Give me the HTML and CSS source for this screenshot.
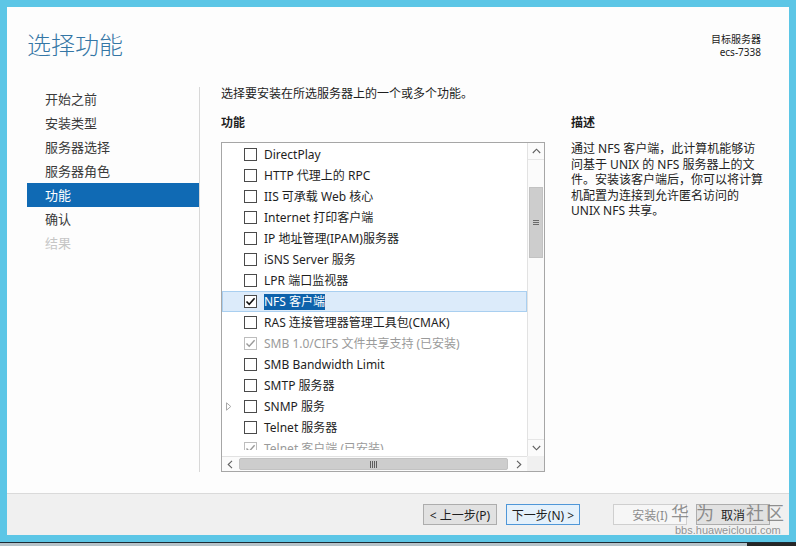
FILE: index.html
```html
<!DOCTYPE html>
<html lang="zh-CN">
<head>
    <meta charset="UTF-8">
    <title>添加角色和功能向导 - 选择功能</title>
    <link rel="stylesheet" href="styles.css">
</head>
<body>
    <div class="screen">
        <div class="window">
            <!-- Header: page title and target server -->
            <div class="head">
                <h1 class="title">选择功能</h1>
                <div class="target">
                    <div>目标服务器</div>
                    <div>ecs-7338</div>
                </div>
            </div>

            <div class="body">
                <!-- Wizard steps -->
                <div class="steps">
                    <div class="step">开始之前</div>
                    <div class="step">安装类型</div>
                    <div class="step">服务器选择</div>
                    <div class="step">服务器角色</div>
                    <div class="step active">功能</div>
                    <div class="step">确认</div>
                    <div class="step disabled">结果</div>
                </div>

                <div class="content">
                    <p class="intro">选择要安装在所选服务器上的一个或多个功能。</p>
                    <div class="cols">
                        <div class="features">
                            <div class="label">功能</div>
                            <div class="listbox">
                                <div class="list-main">
                                    <div class="rows-wrap">
                                        <div class="rows">
                                            <div class="row"><span class="exp"></span><span class="check"></span><span class="name">DirectPlay</span></div>
                                            <div class="row"><span class="exp"></span><span class="check"></span><span class="name">HTTP 代理上的 RPC</span></div>
                                            <div class="row"><span class="exp"></span><span class="check"></span><span class="name">IIS 可承载 Web 核心</span></div>
                                            <div class="row"><span class="exp"></span><span class="check"></span><span class="name">Internet 打印客户端</span></div>
                                            <div class="row"><span class="exp"></span><span class="check"></span><span class="name">IP 地址管理(IPAM)服务器</span></div>
                                            <div class="row"><span class="exp"></span><span class="check"></span><span class="name">iSNS Server 服务</span></div>
                                            <div class="row"><span class="exp"></span><span class="check"></span><span class="name">LPR 端口监视器</span></div>
                                            <div class="row selected"><span class="exp"></span><span class="check"><svg viewBox="0 0 11 11" width="11" height="11"><path d="M1.5 5.5 L4.2 8.3 L9.6 2.2" fill="none" stroke="#111" stroke-width="1.6"/></svg></span><span class="name"><span class="hl">NFS 客户端</span></span></div>
                                            <div class="row"><span class="exp"></span><span class="check"></span><span class="name">RAS 连接管理器管理工具包(CMAK)</span></div>
                                            <div class="row installed"><span class="exp"></span><span class="check"><svg viewBox="0 0 11 11" width="11" height="11"><path d="M1.5 5.5 L4.2 8.3 L9.6 2.2" fill="none" stroke="#9a9a9a" stroke-width="1.4"/></svg></span><span class="name">SMB 1.0/CIFS 文件共享支持 (已安装)</span></div>
                                            <div class="row"><span class="exp"></span><span class="check"></span><span class="name">SMB Bandwidth Limit</span></div>
                                            <div class="row"><span class="exp"></span><span class="check"></span><span class="name">SMTP 服务器</span></div>
                                            <div class="row"><span class="exp"><svg viewBox="0 0 6 9" width="6" height="9"><path d="M0.5 0.8 L4.8 4.5 L0.5 8.2 Z" fill="none" stroke="#a8a8a8" stroke-width="1"/></svg></span><span class="check"></span><span class="name">SNMP 服务</span></div>
                                            <div class="row"><span class="exp"></span><span class="check"></span><span class="name">Telnet 服务器</span></div>
                                            <div class="row installed"><span class="exp"></span><span class="check"><svg viewBox="0 0 11 11" width="11" height="11"><path d="M1.5 5.5 L4.2 8.3 L9.6 2.2" fill="none" stroke="#9a9a9a" stroke-width="1.4"/></svg></span><span class="name">Telnet 客户端 (已安装)</span></div>
                                        </div>
                                    </div>
                                    <div class="vscroll">
                                        <div class="arrow"><svg viewBox="0 0 9 6" width="9" height="6"><path d="M0.8 5 L4.5 1.2 L8.2 5" fill="none" stroke="#606060" stroke-width="1.1"/></svg></div>
                                        <div class="vtrack">
                                            <div class="vthumb"><span class="grip-h"></span></div>
                                        </div>
                                        <div class="arrow"><svg viewBox="0 0 9 6" width="9" height="6"><path d="M0.8 1 L4.5 4.8 L8.2 1" fill="none" stroke="#606060" stroke-width="1.1"/></svg></div>
                                    </div>
                                </div>
                                <div class="list-foot">
                                    <div class="hscroll">
                                        <div class="arrow"><svg viewBox="0 0 6 9" width="6" height="9"><path d="M5 0.8 L1.2 4.5 L5 8.2" fill="none" stroke="#606060" stroke-width="1.1"/></svg></div>
                                        <div class="hthumb"><span class="grip-v"></span></div>
                                        <div class="arrow"><svg viewBox="0 0 6 9" width="6" height="9"><path d="M1 0.8 L4.8 4.5 L1 8.2" fill="none" stroke="#606060" stroke-width="1.1"/></svg></div>
                                    </div>
                                    <div class="corner"></div>
                                </div>
                            </div>
                        </div>

                        <div class="desc">
                            <div class="label">描述</div>
                            <p class="desc-text">通过 NFS 客户端，此计算机能够访<br>问基于 UNIX 的 NFS 服务器上的文<br>件。安装该客户端后，你可以将计算<br>机配置为连接到允许匿名访问的<br>UNIX NFS 共享。</p>
                        </div>
                    </div>
                </div>
            </div>

            <!-- Wizard buttons -->
            <div class="foot">
                <button class="btn">&lt; 上一步(P)</button>
                <button class="btn default">下一步(N) &gt;</button>
                <button class="btn off">安装(I)</button>
                <button class="btn">取消</button>
            </div>
        </div>
        <div class="taskbar"><span class="task-dark"></span></div>

        <div class="watermark">
            <div class="wm-big"><span>华</span><span>为</span><span class="gap">社</span><span>区</span></div>
            <div class="wm-small">bbs.huaweicloud.com</div>
        </div>
    </div>
</body>
</html>
```

FILE: styles.css
```css
body {
    margin: 0;
    font-family: "Noto Sans", "Noto Sans CJK SC", sans-serif;
    font-size: 12px;
    color: #1e1e1e;
    background-color: #5cc6e6;
}

.screen {
    position: relative;
    width: 796px;
    height: 546px;
    overflow: hidden;
}

.window {
    margin: 7px 7px 7px 7px;
    width: 782px;
    height: 528px;
    background-color: #fdfdfd;
    display: flex;
    flex-direction: column;
}

/* Header */
.head {
    height: 80px;
    display: flex;
    justify-content: space-between;
    box-sizing: border-box;
}

.title {
    margin: 22px 0 0 20px;
    font-size: 24px;
    font-weight: 300;
    line-height: 32px;
    color: #3476a5;
}

.target {
    margin: 26px 28px 0 0;
    font-size: 10px;
    line-height: 12.5px;
    text-align: right;
    color: #222;
}

/* Body */
.body {
    flex: 1;
    display: flex;
}

.steps {
    margin-left: 20px;
    width: 172px;
    height: 385px;
    border-right: 1px solid #d8d8d8;
}

.step {
    height: 24px;
    line-height: 24px;
    padding-left: 18px;
    font-size: 13px;
    color: #3a3a3a;
}

.step.active {
    background-color: #106ab4;
    color: #fff;
}

.step.disabled {
    color: #c6c6c6;
}

.content {
    margin-left: 21px;
}

.intro {
    margin: 0;
    line-height: 14px;
}

.cols {
    display: flex;
}

.label {
    margin-top: 14px;
    line-height: 16px;
    font-weight: bold;
}

.features {
    width: 324px;
}

.listbox {
    margin-top: 11px;
    width: 324px;
    height: 330px;
    border: 1px solid #a6a6a6;
    box-sizing: border-box;
    background-color: #fff;
    display: flex;
    flex-direction: column;
}

.list-main {
    display: flex;
    height: 313px;
}

.rows-wrap {
    flex: 1;
}

.rows {
    height: 307px;
    padding-top: 1px;
    box-sizing: border-box;
    overflow: hidden;
}

.row {
    height: 21px;
    display: flex;
    align-items: center;
    box-sizing: border-box;
    white-space: nowrap;
}

.row.selected {
    background-color: #dcebfa;
    border: 1px solid #a9cff0;
}

.row.selected .exp {
    width: 21px;
}

.exp {
    width: 22px;
    display: flex;
    align-items: center;
    padding-left: 4px;
    box-sizing: border-box;
}

.check {
    width: 13px;
    height: 13px;
    border: 1px solid #4a4a4a;
    box-sizing: border-box;
    background-color: #fff;
    display: flex;
    align-items: center;
    justify-content: center;
}

.name {
    margin-left: 7px;
    line-height: 16px;
}

.hl {
    background-color: #0d62ab;
    color: #fff;
    display: inline-block;
}

.row.installed .check {
    border-color: #bdbdbd;
}

.row.installed .name {
    color: #9a9a9a;
}

/* Scrollbars */
.vscroll {
    width: 16px;
    border-left: 1px solid #e2e2e2;
    background-color: #fbfbfb;
    display: flex;
    flex-direction: column;
}

.vscroll .arrow {
    height: 16px;
    display: flex;
    align-items: center;
    justify-content: center;
}

.vtrack {
    flex: 1;
    padding-top: 27px;
    border-top: 1px solid #e6e6e6;
    border-bottom: 1px solid #e6e6e6;
}

.vthumb {
    height: 71px;
    margin: 0 1px;
    background-color: #cdcdcd;
    border: 1px solid #c2c2c2;
    box-sizing: border-box;
    display: flex;
    align-items: center;
    justify-content: center;
}

.grip-h {
    width: 6px;
    height: 5px;
    border-top: 1px solid #6a6a6a;
    border-bottom: 1px solid #6a6a6a;
    box-sizing: border-box;
    background: linear-gradient(#cdcdcd 1px, #6a6a6a 1px, #6a6a6a 2px, #cdcdcd 2px);
}

.list-foot {
    flex: 1;
    display: flex;
}

.hscroll {
    flex: 1;
    display: flex;
    border-top: 1px solid #e2e2e2;
    background-color: #fbfbfb;
}

.hscroll .arrow {
    width: 16px;
    display: flex;
    align-items: center;
    justify-content: center;
}

.hthumb {
    flex: 1;
    margin: 1px 3px 1px 1px;
    background-color: #cdcdcd;
    border: 1px solid #c2c2c2;
    border-radius: 2px;
    display: flex;
    align-items: center;
    justify-content: center;
}

.grip-v {
    width: 7px;
    height: 7px;
    background: repeating-linear-gradient(90deg, #5e5e5e 0 1px, #cdcdcd 1px 2px);
}

.corner {
    width: 17px;
    background-color: #f0f0f0;
}

/* Description */
.desc {
    margin-left: 26px;
}

.desc-text {
    margin: 10px 0 0;
    line-height: 15.5px;
    white-space: nowrap;
    color: #222;
}

/* Footer buttons */
.foot {
    height: 42px;
    box-sizing: border-box;
    border-top: 1px solid #dadada;
    background-color: #f0f0f0;
    display: flex;
    justify-content: flex-end;
    padding: 10px 19px 0 0;
}

.btn {
    width: 74px;
    height: 21px;
    margin-left: 9px;
    padding: 0;
    font-family: "Noto Sans", "Noto Sans CJK SC", sans-serif;
    font-size: 12px;
    color: #1e1e1e;
    background-color: #e1e1e1;
    border: 1px solid #adadad;
}

.btn.default {
    background-color: #e5f1fb;
    border-color: #4f97d8;
}

.btn.off {
    margin-left: 33px;
    background-color: #f6f6f6;
    border-color: #cfcfcf;
    color: #8c8c8c;
}

.taskbar {
    height: 4px;
    border-top: 1px solid #1d2c35;
    background-color: #b6c3c9;
    display: flex;
    justify-content: flex-end;
}

.task-dark {
    width: 49px;
    background-color: #262626;
}

/* Watermark overlay */
.watermark {
    position: absolute;
    left: 671px;
    top: 502px;
    color: rgba(110, 110, 110, 0.75);
    pointer-events: none;
}

.wm-big {
    display: flex;
    font-size: 18px;
    line-height: 22px;
}

.wm-big span {
    width: 25px;
}

.wm-big .gap {
    margin-left: 25px;
    width: 20px;
}

.wm-small {
    margin-left: 4px;
    font-family: "Liberation Sans", sans-serif;
    font-size: 11px;
    line-height: 12px;
    color: rgba(120, 120, 120, 0.8);
}
```
